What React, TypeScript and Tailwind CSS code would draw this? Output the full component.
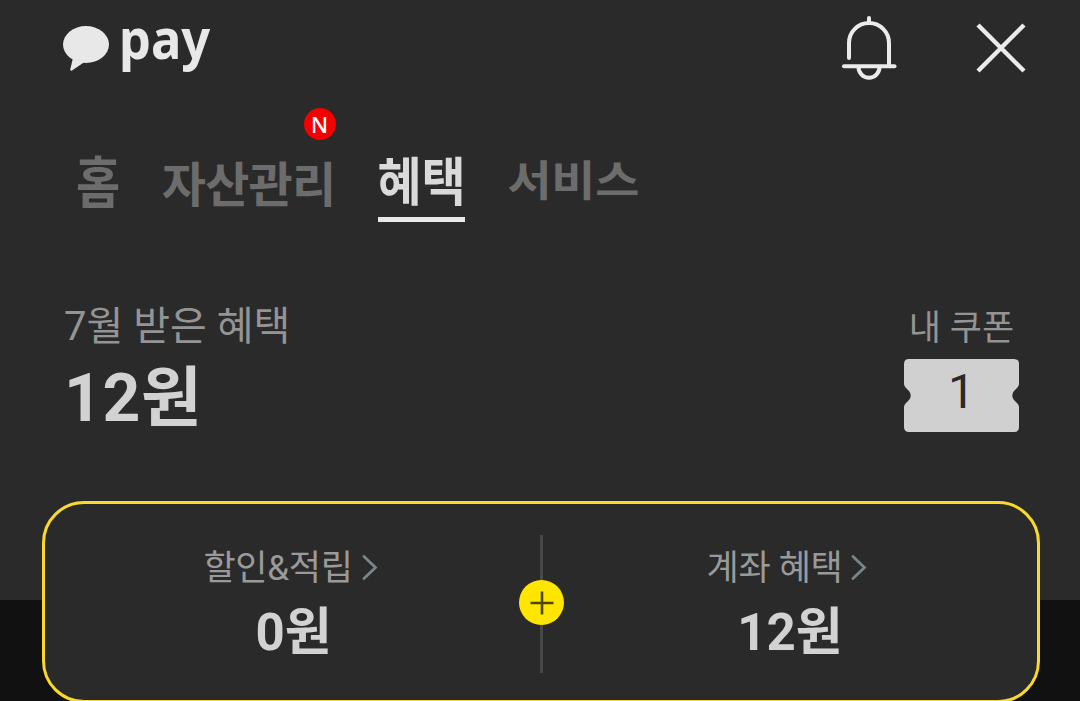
import React from 'react'

interface Tab {
  label: string
  active?: boolean
  isNew?: boolean
  className: string
}

const tabs: Tab[] = [
  { label: '홈', className: 'pt-[5px] scale-y-[1.15] tracking-[-0.5px]' },
  { label: '자산관리', isNew: true, className: 'pt-[7px] tracking-[-0.7px]' },
  {
    label: '혜택',
    active: true,
    className: 'pt-[5px] scale-y-[1.08] tracking-[-0.2px]',
  },
  { label: '서비스', className: 'pt-[3px] scale-y-[0.88] tracking-[-0.3px]' },
]

type BenefitProps = {
  title: string
  amount: string
  className?: string
}

const Benefit = ({ title, amount, className = '' }: BenefitProps) => {
  return (
    <div className={`flex flex-col items-center ${className}`}>
      <div className="flex items-center h-[52px] gap-[9px] mr-[6px]">
        <span className="text-[35px] leading-[52px] tracking-[-0.3px] text-[#9a9a9a]">
          {title}
        </span>
        <svg
          className="-mt-[2px]"
          width="16"
          height="26"
          viewBox="0 0 16 26"
          fill="none"
        >
          <path
            d="M2 1.500 13.500 12.500 2 23.500"
            stroke="#77858d"
            strokeWidth="2.8"
            strokeLinecap="round"
          />
        </svg>
      </div>
      <span className="text-[51px] leading-[76px] font-bold text-[#d2d2d2]">
        {amount}
      </span>
    </div>
  )
}

const App = () => {
  return (
    <div className="w-[1080px] h-[701px] overflow-hidden bg-[#111111] font-['Roboto','Noto_Sans_CJK_KR',sans-serif]">
      <section className="h-[600px] bg-[#2a2a2a]">
        {/* header */}
        <header className="flex justify-between h-[90px] pl-[62px] pr-[54px]">
          <div className="flex">
            <svg
              className="mt-[25px]"
              width="48"
              height="47"
              viewBox="0 0 48 47"
              fill="#e8e8e8"
            >
              <ellipse cx="24" cy="19.5" rx="23" ry="18.5" />
              <path d="M11 33 8.2 44.6Q8.4 46.2 10 45.4L24 36Z" />
            </svg>
            <span className="ml-[9px] h-[76px] leading-[76px] text-[55px] font-bold text-[#e8e8e8] font-['Noto_Sans',sans-serif] origin-left scale-x-[0.92]">
              pay
            </span>
          </div>
          <div className="flex">
            <svg
              className="mt-[14px]"
              width="58"
              height="68"
              viewBox="0 0 58 68"
              fill="none"
              stroke="#ebebeb"
              strokeWidth="4"
              strokeLinecap="round"
            >
              <path d="M29 4v5" />
              <path d="M9 44V29a20 20 0 0 1 40 0v22" />
              <path d="M4 52.3h50.500" />
              <path d="M18.500 53a10.500 10.800 0 0 0 21 0" />
            </svg>
            <svg
              className="ml-[78px] mt-[22px]"
              width="50"
              height="52"
              viewBox="0 0 50 52"
              fill="none"
              stroke="#ebebeb"
              strokeWidth="4.4"
            >
              <path d="M2 3 48 49M48 3 2 49" />
            </svg>
          </div>
        </header>

        {/* tabs */}
        <nav className="flex gap-[42px] pl-[76px] pt-[52px] h-[204px]">
          {tabs.map((tab) => (
            <div
              key={tab.label}
              className={`relative h-[80px] text-[48px] leading-[74px] font-bold whitespace-nowrap ${
                tab.active
                  ? 'text-[#dadada] border-b-5 border-[#e8e8e8]'
                  : 'text-[#6c6c6c]'
              }`}
            >
              <span className={`block h-[80px] ${tab.className}`}>
                {tab.label}
              </span>
              {tab.isNew && (
                <span className="absolute -top-[34px] right-0 w-8 h-8 rounded-full bg-[#f50000] text-white text-[22px] leading-[32px] font-medium text-center font-['Noto_Sans',sans-serif]">
                  N
                </span>
              )}
            </div>
          ))}
        </nav>

        {/* summary */}
        <div className="flex justify-between pl-[64px] pr-[61px]">
          <div className="flex flex-col pt-[3px]">
            <span className="text-[40px] leading-[60px] text-[#949494]">
              7월 받은 혜택
            </span>
            <span className="text-[66px] leading-[84px] font-bold tracking-[0.6px] text-[#d2d2d2]">
              12원
            </span>
          </div>
          <div className="flex flex-col items-center w-[115px]">
            <span className="h-[65px] text-[35px] leading-[70px] text-[#949494] whitespace-nowrap">
              내 쿠폰
            </span>
            <div className="grid w-[115px] h-[73px]">
              <svg
                className="col-start-1 row-start-1"
                width="115"
                height="73"
                viewBox="0 0 115 73"
                fill="#d0d0d0"
              >
                <path d="M5 0H110Q115 0 115 5V25Q115 27 113 29L110 32Q106.500 36.500 110 41L113 44Q115 46 115 48V68Q115 73 110 73H5Q0 73 0 68V48Q0 46 2 44L5 41Q8.500 36.500 5 32L2 29Q0 27 0 25V5Q0 0 5 0Z" />
              </svg>
              <span className="col-start-1 row-start-1 text-center text-[48px] leading-[66px] text-[#2a2a2a]">
                1
              </span>
            </div>
          </div>
        </div>
      </section>

      {/* benefit card */}
      <section className="relative -mt-[99px] ml-[42px] w-[998px] h-[202px] flex justify-between border-3 border-[#f8d92c] rounded-[42px] bg-[#2a2a2a] pt-[39px]">
        <Benefit title="할인&적립" amount="0원" className="w-[495px] pl-[2px]" />
        <div className="relative w-[3px] h-[138px] -mt-[8px] bg-[#484848]">
          <div className="absolute top-[45px] -left-[21px] w-[45px] h-[45px] rounded-full bg-[#ffe600] flex items-center justify-center">
            <svg width="24" height="24" viewBox="0 0 24 24" stroke="#4b4700" strokeWidth="2.600">
              <path d="M12 0.500v23M0.500 12h23" />
            </svg>
          </div>
        </div>
        <Benefit title="계좌 혜택" amount="12원" className="w-[494px]" />
      </section>
    </div>
  )
}

export default App
